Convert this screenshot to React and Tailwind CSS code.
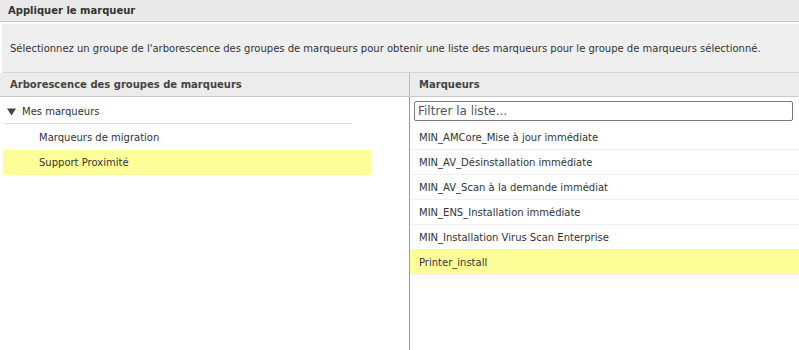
import React from 'react';

const markers = [
  'MIN_AMCore_Mise à jour immédiate',
  'MIN_AV_Désinstallation immédiate',
  'MIN_AV_Scan à la demande immédiat',
  'MIN_ENS_Installation immédiate',
  'MIN_Installation Virus Scan Enterprise',
  'Printer_install',
];

const App = () => {
  const selected = 'Printer_install';

  return (
    <div className="w-[799px] h-[350px] bg-white text-[10px] text-[#333] font-['DejaVu_Sans',sans-serif] flex flex-col overflow-hidden">
      <div className="h-[22px] shrink-0 bg-[#e9e9e9] border-b border-[#c6c6c6] pl-[8px] flex items-center font-bold text-[#333]">
        Appliquer le marqueur
      </div>

      <div className="h-[49px] shrink-0 mt-[2px] ml-[2px] bg-[#efefef] border-b border-[#d6d6d6] pl-[8px] flex items-center">
        Sélectionnez un groupe de l'arborescence des groupes de marqueurs pour obtenir une liste des marqueurs pour le groupe de marqueurs sélectionné.
      </div>

      <div className="h-[24px] shrink-0 flex bg-[#ececec] border-b border-[#c9c9c9] font-bold text-[#444]">
        <div className="w-[410px] border-r border-[#bdbdbd] pl-[10px] flex items-center">
          Arborescence des groupes de marqueurs
        </div>
        <div className="flex-1 pl-[9px] flex items-center">Marqueurs</div>
      </div>

      <div className="flex flex-1">
        <div className="w-[410px] border-r border-[#9a9a9a] pt-[3px]">
          <div className="h-[24px] ml-[5px] w-[347px] border-b border-[#e2e2e2] flex items-center">
            <svg width="9" height="8" viewBox="0 0 9 8" className="ml-[2px] mr-[6px]">
              <path d="M0 0.5 L9 0.5 L4.5 7.5 Z" fill="#444" />
            </svg>
            Mes marqueurs
          </div>
          <div className="h-[26px] pl-[39px] flex items-center">Marqueurs de migration</div>
          <div className="h-[25px] ml-[3px] w-[368px] pl-[36px] flex items-center bg-[#ffff99]">
            Support Proximité
          </div>
        </div>

        <div className="flex-1 pt-[4px]">
          <div className="px-[4px] pb-[4px]">
            <div className="h-[20px] w-[379px] border border-[#7a7a7a] rounded-[2px] pl-[3px] flex items-center text-[12px] text-[#555]">
              Filtrer la liste...
            </div>
          </div>
          {markers.map((m) => (
            <div
              key={m}
              className={`h-[25px] pl-[9px] flex items-center border-b border-[#f0f0f0] ${
                m === selected ? 'bg-[#ffff99]' : ''
              }`}
            >
              {m}
            </div>
          ))}
        </div>
      </div>
    </div>
  );
};

export default App;
